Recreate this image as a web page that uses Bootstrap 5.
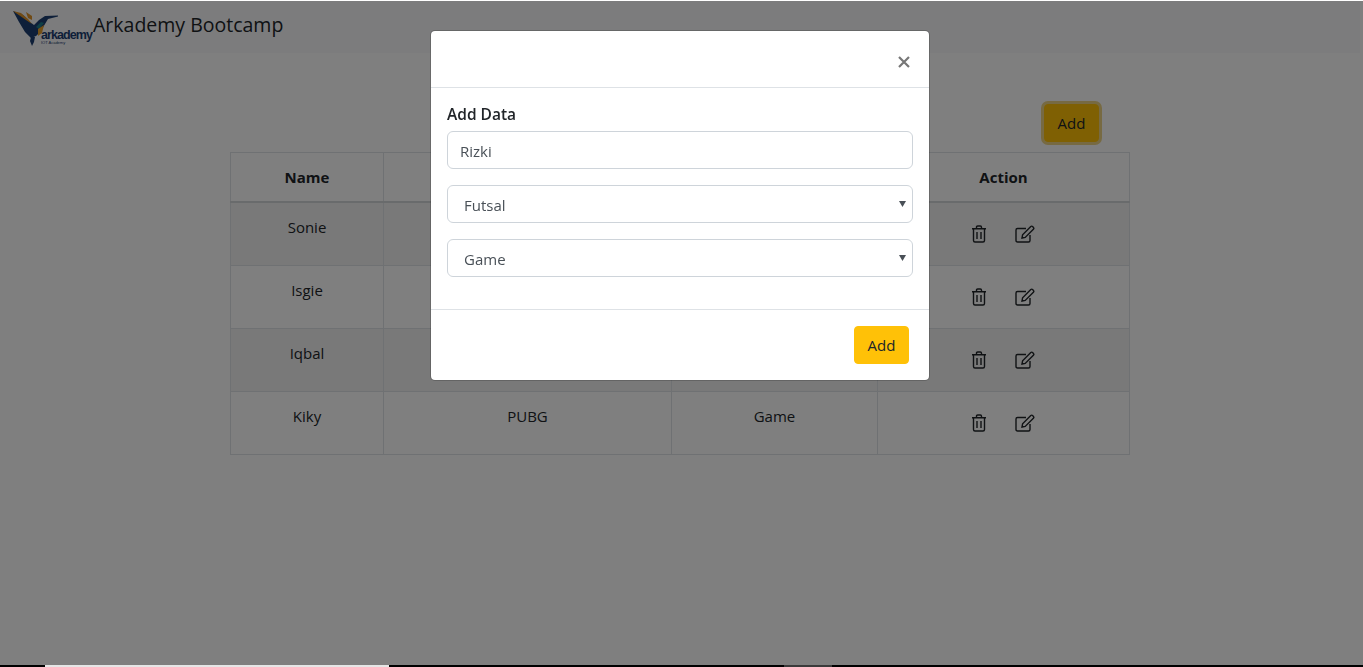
<!DOCTYPE html>
<html lang="en">

<head>
    <meta charset="UTF-8">
    <meta name="viewport" content="width=device-width, initial-scale=1.0">
    <title>Arkademy Bootcamp</title>
    <link href="https://cdn.jsdelivr.net/npm/bootstrap@5.3.0/dist/css/bootstrap.min.css" rel="stylesheet">
    <style>
        :root {
            --bs-border-radius: 4px;
        }

        body {
            font-family: "Open Sans", "Noto Sans", sans-serif;
            font-size: 15px;
            color: #212529;
            overflow: hidden;
            padding: 1px 3px 0 0;
        }

        /* Navbar */
        .top-bar {
            height: 52px;
            padding: 0 0 0 13px;
            align-items: flex-start;
            justify-content: flex-start;
        }

        .brand-logo {
            width: 80px;
            height: 37px;
            margin-top: 9px;
            flex: none;
        }

        .brand-title {
            font-size: 19.500px;
            line-height: 26px;
            margin-top: 11px;
            color: #212529;
        }

        /* Page content */
        .page-wrap {
            width: 900px;
            margin: 0 auto;
        }

        .add-row {
            padding: 51px 31px 10px 0;
        }

        .btn-amber {
            background-color: #ffc107;
            border-color: #ffc107;
            color: #212529;
            font-size: 15px;
            width: 55px;
            height: 38px;
            padding: 0;
            border-radius: 4px;
        }

        .btn-focused {
            box-shadow: 0 0 0 3px rgba(222, 170, 12, .5);
        }

        .data-table {
            table-layout: fixed;
            margin: 0;
            --bs-table-striped-bg: rgba(0, 0, 0, .05);
            --bs-table-border-color: #dee2e6;
        }

        .data-table th {
            height: 49px;
            padding: 12px;
            vertical-align: middle;
            font-weight: 700;
            border-bottom-width: 2px;
            border-bottom-color: #d3d6d9;
        }

        .data-table td {
            height: 63px;
            padding: 12px;
            line-height: 24px;
            vertical-align: top;
        }

        .data-table tbody tr:first-child td {
            height: 64px;
        }

        .data-table .cell-action {
            padding: 0 3px 0 0;
            vertical-align: middle;
        }

        .col-name { width: 153px; }
        .col-hobby { width: 288px; }
        .col-cat { width: 206px; }

        .btn-icon {
            padding: 0;
            width: 42px;
            height: 38px;
            border: 0;
            color: #212529;
        }

        /* Modal */
        .backdrop-top {
            top: 1px;
        }

        .add-modal {
            padding-right: 3px;
        }

        .add-dialog {
            margin-top: 30px;
        }

        .add-content {
            height: 351px;
            border-radius: 5px;
        }

        .add-header {
            height: 57px;
            padding: 0 19px 19px 0;
            justify-content: flex-end;
            align-items: flex-end;
        }

        .add-close {
            width: 12px;
            height: 12px;
            padding: 0;
            margin: 0;
            opacity: 1;
            background: url("data:image/svg+xml,%3csvg xmlns='http://www.w3.org/2000/svg' viewBox='0 0 12 12'%3e%3cpath stroke='%23777' stroke-width='2.200' d='M1 1l10 10M11 1L1 11'/%3e%3c/svg%3e") center / 12px 12px no-repeat;
        }

        .add-body {
            padding: 15px 16px 16px;
            flex: none;
        }

        .add-label {
            display: block;
            font-size: 15.500px;
            font-weight: 600;
            line-height: 22px;
            margin: 0 0 6px;
        }

        .add-input {
            height: 38px;
            font-size: 15px;
            padding: 2px 12px 0;
            color: #495057;
            border-color: #ced4da;
        }

        .add-select {
            height: 38px;
            font-size: 15px;
            padding: 2px 24px 0 16px;
            color: #495057;
            border-color: #ced4da;
            background-image: url("data:image/svg+xml,%3csvg xmlns='http://www.w3.org/2000/svg' viewBox='0 0 7 6'%3e%3cpath fill='%23495057' d='M0 0h7L3.500 6z'/%3e%3c/svg%3e");
            background-size: 7px 6px;
            background-position: right 6px center;
        }

        .add-footer {
            padding: 16px 20px 16px 16px;
            justify-content: flex-end;
        }

        .add-footer .btn {
            margin: 0;
        }

        /* Strip at the very bottom of the window */
        .window-strip {
            height: 2px;
            background: #000;
            z-index: 2000;
        }

        .strip-light {
            position: absolute;
            left: 45px;
            width: 344px;
            height: 2px;
            background: #e6e6e6;
        }

        .strip-dim {
            position: absolute;
            left: 784px;
            width: 48px;
            height: 2px;
            background: #3a3a3a;
        }
    </style>
</head>

<body>

    <nav class="navbar bg-light top-bar">
        <svg class="brand-logo" viewBox="0 0 80 37" role="img" aria-label="arkademy logo">
            <path fill="#1d3f72" d="M0 1 10 5 17 12 21 15 26 10 32 6 45 5.500 45 6.500 35 9 32 14 28 21 23 26 18 28 12 22 6 12z" />
            <path fill="#e0942a" d="M0 1 8 3 15 9 19 14 13 10z" />
            <path fill="#e0942a" d="M13 2 19 6 19 10 15 8z" />
            <path fill="#1f7f8c" d="M23 17 28 12 31 13 26 19z" />
            <path fill="#e8a02c" d="M25 19 31 15 29 23 25 26z" />
            <path fill="#1d3f72" d="M18 27 22 27 21 32 19 36 17 31z" />
            <text x="28" y="29" font-family="Liberation Sans, sans-serif" font-size="12.500" font-weight="700" fill="#1d3f72" textLength="52">arkademy</text>
            <text x="28" y="34" font-family="Liberation Sans, sans-serif" font-size="4" fill="#1d3f72">IOT Academy</text>
        </svg>
        <span class="brand-title">Arkademy Bootcamp</span>
    </nav>

    <div class="page-wrap">
        <div class="d-flex justify-content-end add-row">
            <button type="button" class="btn btn-amber btn-focused">Add</button>
        </div>

        <table class="table table-bordered table-striped text-center data-table">
            <colgroup>
                <col class="col-name">
                <col class="col-hobby">
                <col class="col-cat">
                <col>
            </colgroup>
            <thead>
                <tr>
                    <th>Name</th>
                    <th>Hobby</th>
                    <th>Category</th>
                    <th>Action</th>
                </tr>
            </thead>
            <tbody id="rows"></tbody>
        </table>
    </div>

    <div class="modal-backdrop show backdrop-top"></div>

    <div class="modal show d-block add-modal" tabindex="-1">
        <div class="modal-dialog add-dialog">
            <div class="modal-content add-content">
                <div class="modal-header add-header">
                    <button type="button" class="btn-close add-close" aria-label="Close"></button>
                </div>
                <div class="modal-body add-body">
                    <label class="add-label" for="name-input">Add Data</label>
                    <input id="name-input" type="text" class="form-control add-input mb-3" value="Rizki">
                    <select class="form-select add-select mb-3">
                        <option>Futsal</option>
                    </select>
                    <select class="form-select add-select mb-3">
                        <option>Game</option>
                    </select>
                </div>
                <div class="modal-footer add-footer">
                    <button type="button" class="btn btn-amber">Add</button>
                </div>
            </div>
        </div>
    </div>

    <div class="fixed-bottom window-strip">
        <div class="strip-light"></div>
        <div class="strip-dim"></div>
    </div>

    <script>
        // Table rows
        const people = [
            ["Sonie", "Futsal", "Sport"],
            ["Isgie", "Reading", "Hobby"],
            ["Iqbal", "Mobile Legends", "Game"],
            ["Kiky", "PUBG", "Game"]
        ];

        const trashIcon = `<svg width="16" height="18" viewBox="0 0 16 18" fill="none" stroke="currentColor" stroke-width="1.4"><path d="M1 3.7h14M5.500 3.7V2.200q0-1.200 1.200-1.200h2.600q1.200 0 1.200 1.200v1.500M2.500 3.700v11.800q0 1.500 1.500 1.500h8q1.500 0 1.500-1.500V3.700M6 7v7M10 7v7"/></svg>`;
        const editIcon = `<svg width="20" height="18" viewBox="0 0 20 18" fill="none" stroke="currentColor" stroke-width="1.4"><path d="M15 10v5.500q0 1.500-1.500 1.500H2.500Q1 17 1 15.500V5q0-1.500 1.500-1.500H11"/><path d="M7 13l.6-3.200L15.800 1.600q.9-.9 1.800 0l.8.8q.9.9 0 1.800L10.200 12.400z"/></svg>`;

        document.getElementById("rows").innerHTML = people.map(p => `
            <tr>
                <td>${p[0]}</td>
                <td>${p[1]}</td>
                <td>${p[2]}</td>
                <td class="cell-action">
                    <div class="d-flex justify-content-center align-items-center gap-1">
                        <button type="button" class="btn btn-icon d-flex justify-content-center align-items-center">${trashIcon}</button>
                        <button type="button" class="btn btn-icon d-flex justify-content-center align-items-center">${editIcon}</button>
                    </div>
                </td>
            </tr>`).join("");
    </script>

    <script src="https://cdn.jsdelivr.net/npm/bootstrap@5.3.0/dist/js/bootstrap.bundle.min.js"></script>
</body>

</html>
